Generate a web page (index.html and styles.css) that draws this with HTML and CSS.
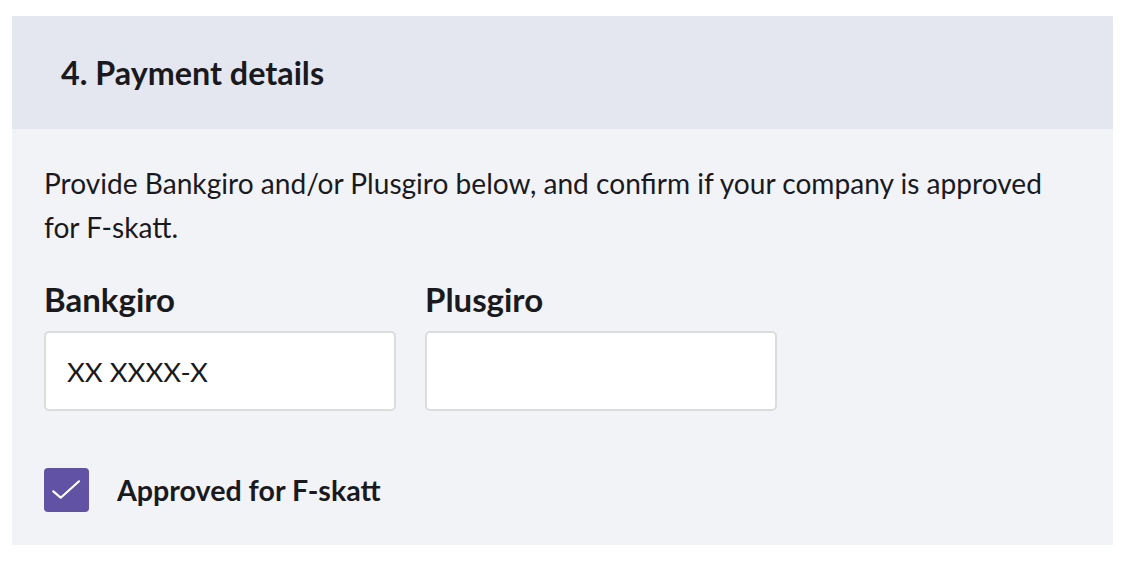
FILE: index.html
```html
<!DOCTYPE html>
<html lang="en">
<head>
<meta charset="utf-8">
<title>Payment details</title>
<link rel="stylesheet" href="styles.css">
</head>
<body>
<section class="card">
  <header class="card-header">
    <h2 class="card-title">4. Payment details</h2>
  </header>
  <div class="card-body">
    <p class="intro">Provide Bankgiro and/or Plusgiro below, and confirm if your company is approved for F-skatt.</p>
    <div class="fields">
      <label class="field">
        <span class="field-label">Bankgiro</span>
        <span class="input">XX XXXX-X</span>
      </label>
      <label class="field">
        <span class="field-label">Plusgiro</span>
        <span class="input"></span>
      </label>
    </div>
    <div class="check-row">
      <span class="checkbox">
        <svg width="45" height="44" viewBox="0 0 45 44"><path d="M9.3 23.3 L16.7 29.7 L35 13.3" fill="none" stroke="#fff" stroke-width="2.2" stroke-linecap="round" stroke-linejoin="round"/></svg>
      </span>
      <span class="check-label">Approved for F-skatt</span>
    </div>
  </div>
</section>
</body>
</html>
```
FILE: styles.css
```css
html, body {
  margin: 0;
  padding: 0;
  background: #ffffff;
}
body {
  font-family: Lato, "Noto Sans", sans-serif;
  color: #1a1a1e;
  padding: 16px 19px 0 12px;
}
.card {
  background: #f2f3f7;
}
.card-header {
  background: #e4e7f0;
  height: 113px;
  display: flex;
  align-items: center;
  padding-left: 49px;
  box-sizing: border-box;
}
.card-title {
  margin: 0;
  font-size: 32.3px;
  font-weight: 700;
  line-height: 32px;
}
.card-body {
  padding: 32px 32px 33px 32px;
}
.intro {
  margin: 0;
  font-size: 28.1px;
  line-height: 44px;
  max-width: 1010px;
}
.fields {
  display: flex;
  gap: 29px;
  margin-top: 30px;
}
.field {
  display: flex;
  flex-direction: column;
  width: 352px;
}
.field-label {
  font-size: 33px;
  font-weight: 700;
  line-height: 40px;
  margin-bottom: 12px;
}
.input {
  box-sizing: border-box;
  height: 80px;
  background: #ffffff;
  border: 2px solid #dcdcdf;
  border-radius: 5px;
  padding: 0 21px;
  display: flex;
  align-items: center;
  font-size: 27.5px;
}
.check-row {
  display: flex;
  align-items: center;
  gap: 28px;
  margin-top: 57px;
}
.checkbox {
  width: 45px;
  height: 44px;
  border-radius: 4px;
  background: #6152a4;
  display: block;
  flex: none;
}
.checkbox svg {
  display: block;
}
.check-label {
  font-size: 28.6px;
  font-weight: 700;
}
```
